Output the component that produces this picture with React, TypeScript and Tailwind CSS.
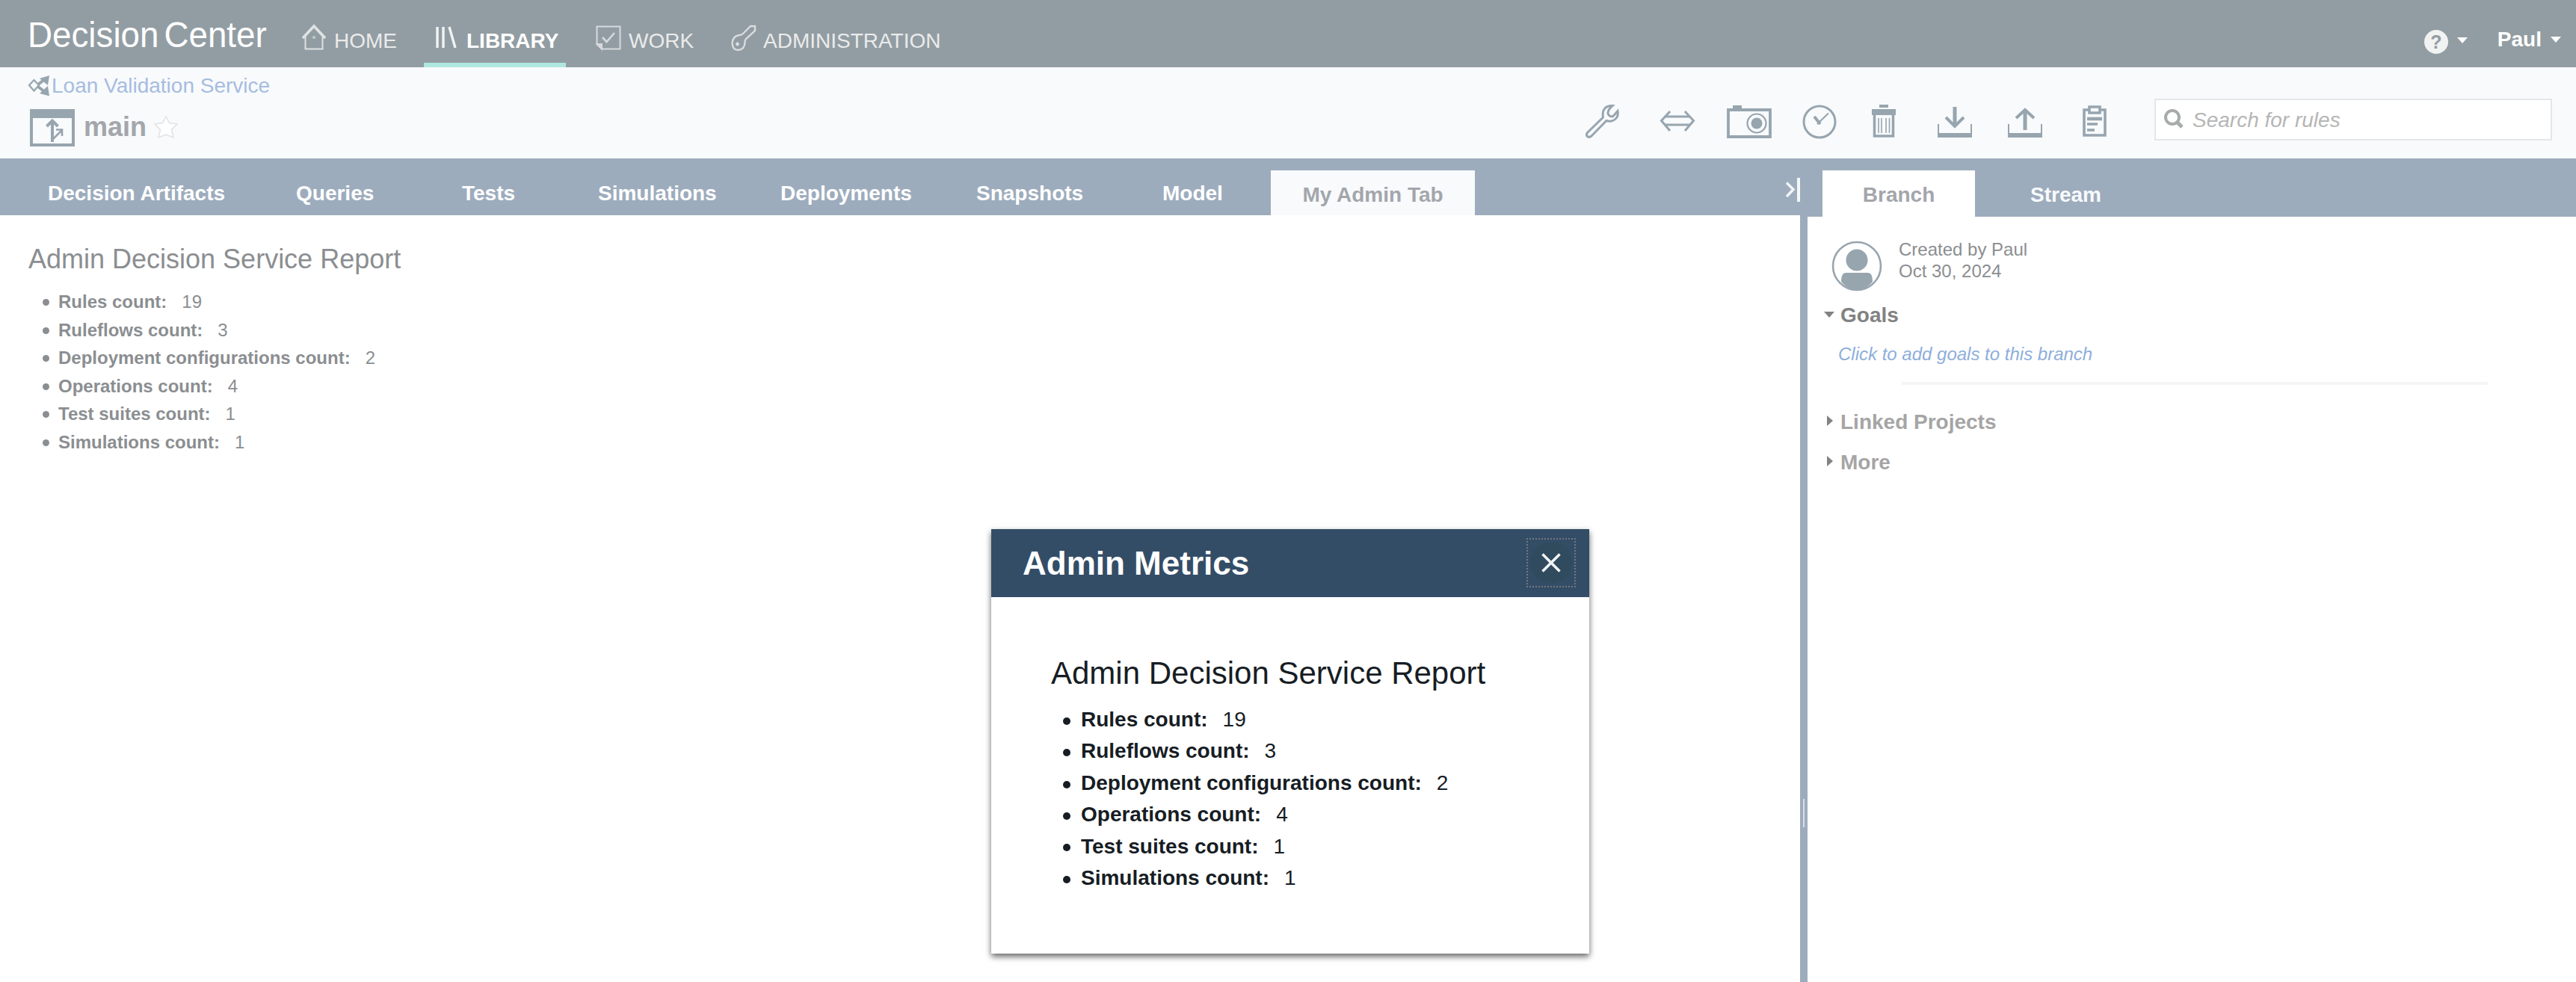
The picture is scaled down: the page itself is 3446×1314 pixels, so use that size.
import React from "react";

const stroke = "#97a5af";

const counts: [string, string][] = [
  ["Rules count:", "19"],
  ["Ruleflows count:", "3"],
  ["Deployment configurations count:", "2"],
  ["Operations count:", "4"],
  ["Test suites count:", "1"],
  ["Simulations count:", "1"],
];

function Header() {
  return (
    <header className="flex h-[90px] bg-[#929da3] text-[28px] leading-[32px]">
      <div className="mt-[20px] ml-[37px] w-[365px] shrink-0">
        <span className="inline-block origin-left scale-x-[0.953] whitespace-nowrap text-[48px] leading-[54px] text-white [word-spacing:-6px]">
          Decision Center
        </span>
      </div>
      <nav className="flex text-[#ebebeb]">
        <a className="flex h-[90px] w-[165px] pt-[39px]">
          <svg width="36" height="38" viewBox="0 0 36 38" className="-mt-[8px] mr-[9px] shrink-0" fill="none" stroke="#dfe2e3">
            <path d="M3 20 L18 4 L33 20" strokeWidth="3.6" />
            <path d="M6.500 17 V34.500 H29.500 V17" strokeWidth="2" />
            <circle cx="18" cy="19" r="2" fill="#c4cacd" stroke="none" />
          </svg>
          HOME
        </a>
        <a className="flex h-[90px] w-[190px] border-b-[6px] border-[#aee8e0] pt-[39px] pl-[14px] font-bold text-white">
          <svg width="32" height="30" viewBox="0 0 32 30" className="-mt-[4px] mr-[11px] shrink-0" fill="none" stroke="#f1f3f4" strokeWidth="3.4">
            <path d="M4 1 V29 M12 1 V29 M20 1 L28 29" />
          </svg>
          LIBRARY
        </a>
        <a className="flex h-[90px] w-[181px] pt-[39px] pl-[40px]">
          <svg width="34" height="34" viewBox="0 0 34 34" className="-mt-[5px] mr-[10px] shrink-0" fill="none" stroke="#d6dadc" strokeWidth="2">
            <path d="M1.5 1.5 H32.5 V31.5 H8 L1.5 25 Z" />
            <path d="M1.500 25 H8 V31.500 Z" fill="#d6dadc" />
            <path d="M9 16 L14.5 22 L25 10" strokeWidth="2.6" />
          </svg>
          WORK
        </a>
        <a className="flex h-[90px] pt-[39px] pl-[40px]">
          <svg width="34" height="36" viewBox="0 0 34 36" className="-mt-[6px] mr-[9px] shrink-0" fill="none" stroke="#d9dcde" strokeWidth="2.4">
            <path d="M11 14 Q14 14 16 12 L26 2 H32 V8 L20 19 Q18 21 18.500 24 Q18 33 10 34 Q2 34 1.500 25 Q2 15 11 14 Z" />
            <circle cx="8.500" cy="26" r="2.400" fill="#d9dcde" stroke="none" />
          </svg>
          ADMINISTRATION
        </a>
      </nav>
      <div className="mr-[20px] ml-auto flex font-bold text-white">
        <span className="mt-[40px] flex size-[32px] items-center justify-center rounded-full bg-[#f1f2f2] text-[25px] text-[#929da3]">?</span>
        <svg width="14" height="8" viewBox="0 0 14 8" className="mt-[50px] ml-[12px]" fill="#ffffff"><path d="M0 0 H14 L7 8 Z" /></svg>
        <span className="mt-[37px] ml-[40px]">Paul</span>
        <svg width="14" height="8" viewBox="0 0 14 8" className="mt-[49px] ml-[12px]" fill="#ffffff"><path d="M0 0 H14 L7 8 Z" /></svg>
      </div>
    </header>
  );
}

function Toolbar() {
  return (
    <div className="ml-auto flex h-[122px] pr-[32px]">
      <svg width="46" height="46" viewBox="0 0 46 46" className="mt-[50px] mr-[53px]" fill="none" stroke={stroke} strokeWidth="3">
        <path d="M36 1.500 Q27 1 24 8 Q22.500 12 23.500 17 L2.500 37.500 Q0.500 40 2.500 42.500 Q5 44.500 8 42 L28 21.500 Q37 24 42 17 Q44 13 43 8.500 L37 15.500 Q32 17 30 12 Q29.500 7 36 1.500 Z" />
      </svg>
      <svg width="48" height="30" viewBox="0 0 48 30" className="mt-[57px] mr-[42px]" fill="none" stroke={stroke} strokeWidth="3.4">
        <path d="M14 2 L2.500 14.500 L14 28 M34 2 L45.500 14.500 L34 28 M7 9 H41 M7 20 H41" strokeWidth="3" />
      </svg>
      <svg width="60" height="46" viewBox="0 0 60 46" className="mt-[51px] mr-[41px]" fill="none" stroke={stroke} strokeWidth="3.800">
        <path d="M2 6 H58 V42 H2 Z" />
        <path d="M8 3 H20" strokeWidth="6" />
        <circle cx="40" cy="24" r="12.500" strokeWidth="2.200" />
        <circle cx="40" cy="24" r="7.500" fill={stroke} stroke="none" />
      </svg>
      <svg width="46" height="46" viewBox="0 0 46 46" className="mt-[50px] mr-[47px]" fill="none" stroke={stroke} strokeWidth="3">
        <circle cx="23" cy="23" r="21" />
        <path d="M16 16 L24 26" strokeWidth="4" />
        <path d="M35 11.500 L20 26" strokeWidth="2.200" />
      </svg>
      <svg width="32" height="45" viewBox="0 0 32 45" className="mt-[50px] mr-[56px]" fill="none" stroke={stroke}>
        <path d="M10 2 H22" strokeWidth="4" />
        <path d="M0 10 H32" strokeWidth="8" />
        <path d="M3.500 12 V42 H28.500 V12" strokeWidth="3.500" />
        <path d="M9 18 V38 M13 18 V38 M19 18 V38 M23.500 18 V38" strokeWidth="1.600" />
      </svg>
      <svg width="46" height="44" viewBox="0 0 46 44" className="mt-[53px] mr-[48px]" fill="none" stroke={stroke} strokeWidth="4">
        <path d="M23 -1 V26" strokeWidth="5" />
        <path d="M11 14 L23 26 L35 14" />
        <path d="M1 23 V38 M45 23 V38" strokeWidth="2" />
        <path d="M0 38 H46" strokeWidth="6" />
      </svg>
      <svg width="46" height="44" viewBox="0 0 46 44" className="mt-[53px] mr-[54px]" fill="none" stroke={stroke} strokeWidth="4">
        <path d="M23 31 V5" strokeWidth="5" />
        <path d="M11 15 L23 4 L35 15" />
        <path d="M1 23 V38 M45 23 V38" strokeWidth="2" />
        <path d="M0 38 H46" strokeWidth="6" />
      </svg>
      <svg width="32" height="44" viewBox="0 0 32 44" className="mt-[50px] mr-[64px]" fill="none" stroke={stroke} strokeWidth="3.600">
        <path d="M8 7 H2 V41 H30 V7 H24" />
        <path d="M9 3 H23 V11 H9 Z" />
        <path d="M6 19 H26" strokeWidth="4.500" />
        <path d="M6 26 H20 M6 34 H16" />
      </svg>
      <div className="mt-[42px] flex h-[56px] w-[532px] border-2 border-[#e4e6e7] bg-white">
        <svg width="28" height="28" viewBox="0 0 28 28" className="mt-[11px] ml-[10px]" fill="none" stroke="#a8abab" strokeWidth="4">
          <circle cx="12" cy="12" r="9" />
          <path d="M18 18 L25 25" strokeWidth="5" />
        </svg>
        <span className="mt-[11px] ml-[11px] text-[28px] leading-[32px] text-[#b5b6b6] italic">Search for rules</span>
      </div>
    </div>
  );
}

function SubHeader() {
  return (
    <section className="flex h-[122px] bg-[#f8fafc]">
      <div className="ml-[37px]">
        <div className="flex h-[52px]">
          <svg width="29" height="28" viewBox="0 0 29 28" className="mt-[11px] mr-[3px]" fill="none" stroke={stroke} strokeWidth="2.200">
            <path d="M2 13 L8.500 6 L15 13 L8.500 20.500 Z" />
            <path d="M14 12 L23 5 M14 15 L23 22" strokeWidth="4" />
            <path d="M16 4 L29 0 L27 13 Z M16 24 L29 27.500 L27 14 Z" fill={stroke} stroke="none" />
          </svg>
          <span className="mt-[9px] text-[28px] leading-[32px] text-[#a7bce0]">Loan Validation Service</span>
        </div>
        <div className="flex">
          <svg width="60" height="52" viewBox="0 0 60 52" className="mt-[4px] ml-[3px]" fill="none" stroke={stroke} strokeWidth="4">
            <path d="M2 2 H58 V48 H2 Z" />
            <path d="M0 6 H60" strokeWidth="12" />
            <path d="M30 44 V16 M22.500 23 L30 15.500 L37.500 23" />
            <path d="M31 40 L43 28 M35 27.500 H43 V36" strokeWidth="2.600" />
          </svg>
          <span className="mt-[7px] ml-[12px] text-[36px] leading-[42px] font-bold text-[#a3a6ab]">main</span>
          <svg width="32" height="32" viewBox="0 0 32 32" className="mt-[12px] ml-[10px]" fill="#ffffff" stroke="#e1e3e5" strokeWidth="1.600">
            <path d="M16 2 L20.500 10.500 L31 12 L23.500 19.500 L26 30 L16 26 L6 30 L8.500 19.500 L1 12 L11.500 10.500 Z" />
          </svg>
        </div>
      </div>
      <Toolbar />
    </section>
  );
}

function Report({ large }: { large?: boolean }) {
  return (
    <div className={large ? "text-[#171d24]" : "text-[#8b8e91]"}>
      <h1 className={large ? "text-[42px] leading-[48px]" : "text-[36px] leading-[42px]"}>Admin Decision Service Report</h1>
      <ul className={large ? "mt-[17px] ml-[16px] text-[28px] leading-[42.4px]" : "mt-[17px] ml-[19px] text-[24px] leading-[37.5px]"}>
        {counts.map(([label, value]) => (
          <li key={label} className="flex items-center">
            <span className={large ? "mt-[3px] mr-[14px] size-[10px] rounded-full bg-[#171d24]" : "mt-[2px] mr-[12px] size-[9px] rounded-full bg-[#8b8e91]"} />
            <b>{label}</b>
            <span className={large ? "ml-[20px]" : "ml-[20px]"}>{value}</span>
          </li>
        ))}
      </ul>
    </div>
  );
}

function Tabs() {
  return (
    <div className="flex h-[76px] bg-[#9dacbd] text-[28px] leading-[32px] font-bold text-white">
      <span className="mt-[31px] ml-[64px] w-[332px]">Decision Artifacts</span>
      <span className="mt-[31px] w-[222px]">Queries</span>
      <span className="mt-[31px] w-[182px]">Tests</span>
      <span className="mt-[31px] w-[244px]">Simulations</span>
      <span className="mt-[31px] w-[262px]">Deployments</span>
      <span className="mt-[31px] w-[249px]">Snapshots</span>
      <span className="mt-[31px] w-[145px]">Model</span>
      <span className="mt-[16px] w-[273px] bg-[#f8fafc] pt-[17px] text-center text-[#a3a6ab]">My Admin Tab</span>
      <svg width="20" height="32" viewBox="0 0 20 32" className="mt-[26px] ml-auto" fill="none" stroke="#f4f6f8" strokeWidth="3.400">
        <path d="M2 6.500 L11 15.500 L2 25" />
        <path d="M18 0 V32" strokeWidth="4" />
      </svg>
    </div>
  );
}

function Sidebar() {
  return (
    <aside className="w-[1028px] shrink-0">
      <div className="flex h-[78px] bg-[#9dacbd] text-[28px] leading-[32px] font-bold">
        <span className="mt-[16px] ml-[20px] w-[204px] bg-white pt-[17px] text-center text-[#a3a6ab]">Branch</span>
        <span className="mt-[33px] ml-[74px] text-[#f8fafc]">Stream</span>
      </div>
      <div className="flex pt-[32px] pl-[32px]">
        <svg width="68" height="68" viewBox="0 0 68 68" fill="none" stroke={stroke} strokeWidth="2.600">
          <path d="M13 55 Q13 43 19 43 H49 Q55 43 55 55 Q46 66 34 66.500 Q22 66 13 55 Z" fill={stroke} stroke="none" />
          <circle cx="34" cy="34" r="32" />
          <circle cx="34" cy="26" r="14.500" fill={stroke} stroke="none" />
        </svg>
        <div className="-mt-[3px] ml-[22px] text-[24px] leading-[29px] text-[#8b8e91]">
          <p>Created by Paul</p>
          <p>Oct 30, 2024</p>
        </div>
      </div>
      <div className="mt-[16px] ml-[22px] flex text-[28px] leading-[32px] font-bold text-[#828282]">
        <svg width="14" height="8" viewBox="0 0 14 8" className="mt-[11px] mr-[8px]" fill="#828282"><path d="M0 0 H14 L7 8 Z" /></svg>
        Goals
      </div>
      <p className="mt-[22px] ml-[41px] text-[24px] leading-[28px] text-[#8eaedb] italic">Click to add goals to this branch</p>
      <div className="mt-[23px] ml-[126px] h-[4px] w-[784px] bg-[#f4f5f5]" />
      <div className="mt-[34px] ml-[26px] flex text-[28px] leading-[32px] font-bold text-[#a5a5a5]">
        <svg width="8" height="14" viewBox="0 0 8 14" className="mt-[7px] mr-[10px]" fill="#828282"><path d="M0 0 L8 7 L0 14 Z" /></svg>
        Linked Projects
      </div>
      <div className="mt-[22px] ml-[26px] flex text-[28px] leading-[32px] font-bold text-[#a5a5a5]">
        <svg width="8" height="14" viewBox="0 0 8 14" className="mt-[7px] mr-[10px]" fill="#828282"><path d="M0 0 L8 7 L0 14 Z" /></svg>
        More
      </div>
    </aside>
  );
}

function Dialog() {
  return (
    <div className="absolute top-[708px] left-[1326px] h-[568px] w-[800px] bg-white shadow-[0_4px_8px_rgba(0,0,0,0.6)]">
      <div className="flex h-[91px] bg-[#344d67]">
        <h2 className="mt-[21px] ml-[42px] text-[44px] leading-[50px] font-bold text-white">Admin Metrics</h2>
        <button className="mt-[12px] mr-[18px] ml-auto flex size-[66px] items-center justify-center border-2 border-dotted border-[#71777f]">
          <span className="flex size-[56px] items-center justify-center rounded-full bg-[#304a5e]">
            <svg width="26" height="26" viewBox="0 0 26 26" stroke="#f1f3f4" strokeWidth="3.600"><path d="M1.500 1.500 L24.500 24.500 M24.500 1.500 L1.500 24.500" /></svg>
          </span>
        </button>
      </div>
      <div className="pt-[78px] pl-[80px]">
        <Report large />
      </div>
    </div>
  );
}

export default function App() {
  return (
    <div className="relative flex h-[1314px] w-[3446px] flex-col overflow-hidden bg-white font-['Liberation_Sans',Arial,sans-serif]">
      <Header />
      <SubHeader />
      <div className="flex flex-1">
        <main className="w-[2408px] shrink-0">
          <Tabs />
          <div className="pt-[38px] pl-[38px]">
            <Report />
          </div>
        </main>
        <div className="w-[10px] shrink-0 bg-[#9dacbd] pt-[857px]">
          <div className="mx-auto h-[38px] w-[2px] bg-[#d8dde4]" />
        </div>
        <Sidebar />
      </div>
      <Dialog />
    </div>
  );
}
